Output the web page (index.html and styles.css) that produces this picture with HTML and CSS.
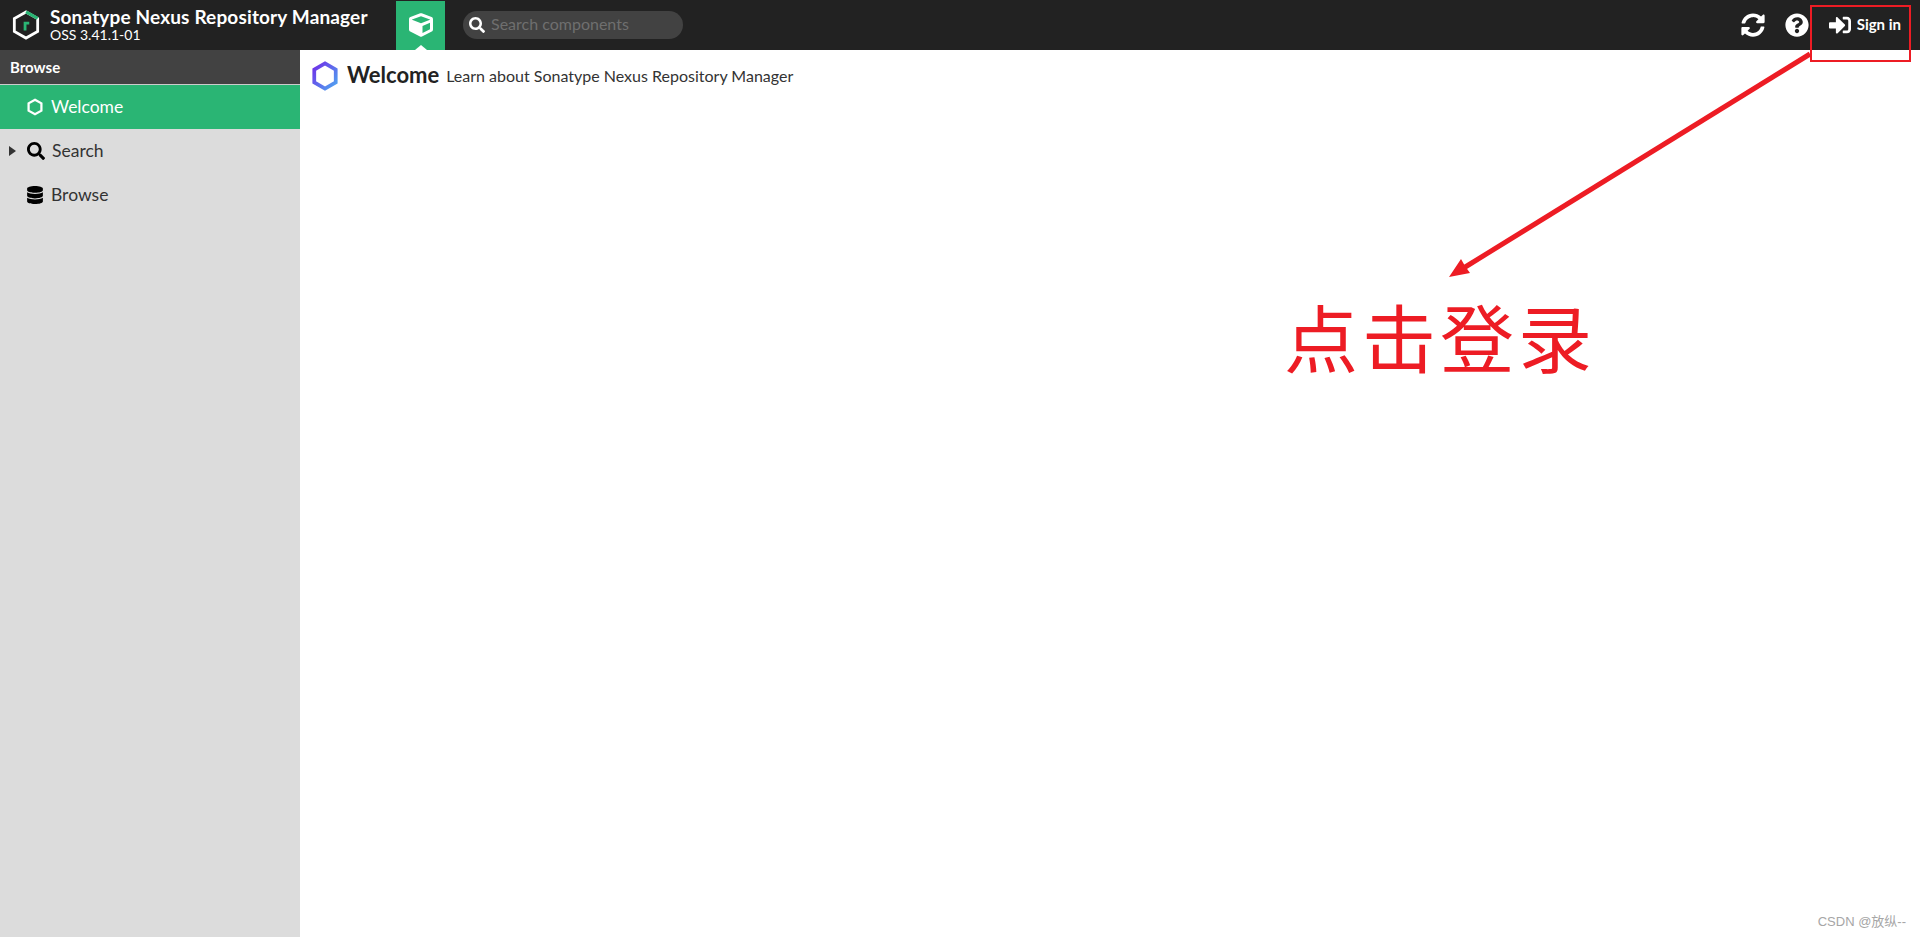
FILE: index.html
```html
<!DOCTYPE html>
<html lang="en">
<head>
  <meta charset="UTF-8">
  <title>Sonatype Nexus Repository Manager</title>
  <link rel="stylesheet" href="styles.css">
</head>
<body>

  <header class="topbar">
    <div class="brand">
      <svg class="brand-logo" viewBox="0 0 30 32">
        <path d="M15 2 L2.5 9 V23 L15 30 L27.5 23 V9 Z" fill="none" stroke="#fff" stroke-width="3"/>
        <path d="M15 2 L27.5 9" fill="none" stroke="#2ab574" stroke-width="3.4"/>
        <path d="M12.5 22 V12.5 H18.5 V15.5 H15.5 V22 Z" fill="#2ab574"/>
      </svg>
      <div class="brand-text">
        <div class="brand-name">Sonatype Nexus Repository Manager</div>
        <div class="brand-version">OSS 3.41.1-01</div>
      </div>
    </div>

    <div class="mode-tab">
      <svg class="mode-icon" viewBox="0 0 512 512"><path fill="#fff" d="M239.1 6.3l-208 78c-18.7 7-31.1 25-31.1 45v225.1c0 18.2 10.3 34.8 26.5 42.9l208 104c13.5 6.8 29.4 6.8 42.9 0l208-104c16.3-8.1 26.5-24.8 26.5-42.9V129.3c0-20-12.4-37.9-31.1-44.9l-208-78C262 2.2 250 2.2 239.1 6.3zM256 68.4l192 72v1.1l-192 78-192-78v-1.1l192-72zm32 356V275.5l160-65v133.9l-160 80z"/></svg>
    </div>

    <div class="search-box">
      <svg class="search-icon" viewBox="0 0 512 512"><path fill="#fff" d="M505 442.7L405.3 343c-4.5-4.5-10.6-7-17-7H372c27.6-35.3 44-79.7 44-128C416 93.1 322.9 0 208 0S0 93.1 0 208s93.1 208 208 208c48.3 0 92.7-16.4 128-44v16.3c0 6.4 2.5 12.5 7 17l99.7 99.7c9.4 9.4 24.6 9.4 33.9 0l28.3-28.3c9.4-9.4 9.4-24.6.1-34zM208 336c-70.7 0-128-57.2-128-128 0-70.7 57.2-128 128-128 70.7 0 128 57.2 128 128 0 70.7-57.2 128-128 128z"/></svg>
      <span class="search-text">Search components</span>
    </div>

    <div class="top-actions">
      <svg class="top-icon" viewBox="0 0 512 512"><path fill="#fff" d="M370.72 133.28C339.458 104.008 298.888 87.962 255.848 88c-77.458.068-144.328 53.178-162.791 126.85-1.344 5.363-6.122 9.15-11.651 9.15H24.103c-7.498 0-13.194-6.807-11.807-14.176C33.933 94.924 134.813 8 256 8c66.448 0 126.791 26.136 171.315 68.685L463.03 40.97C478.149 25.851 504 36.559 504 57.941V192c0 13.255-10.745 24-24 24H345.941c-21.382 0-32.09-25.851-16.971-40.971l41.75-41.749zM32 296h134.059c21.382 0 32.09 25.851 16.971 40.971l-41.75 41.75c31.262 29.273 71.835 45.319 114.876 45.28 77.418-.07 144.315-53.144 162.787-126.849 1.344-5.363 6.122-9.15 11.651-9.15h57.304c7.498 0 13.194 6.807 11.807 14.176C478.067 417.076 377.187 504 256 504c-66.448 0-126.791-26.136-171.315-68.685L48.97 471.03C33.851 486.149 8 475.441 8 454.059V320c0-13.255 10.745-24 24-24z"/></svg>
      <svg class="top-icon" viewBox="0 0 512 512"><path fill="#fff" d="M504 256c0 136.997-111.043 248-248 248S8 392.997 8 256C8 119.083 119.043 8 256 8s248 111.083 248 248zM262.655 90c-54.497 0-89.255 22.957-116.549 63.758-3.536 5.286-2.353 12.415 2.715 16.258l34.699 26.31c5.205 3.947 12.621 3.008 16.665-2.122 17.864-22.658 30.113-35.797 57.303-35.797 20.429 0 45.698 13.148 45.698 32.958 0 14.976-12.363 22.667-32.534 33.976C247.128 238.528 216 254.941 216 296v4c0 6.627 5.373 12 12 12h56c6.627 0 12-5.373 12-12v-1.333c0-28.462 83.186-29.647 83.186-106.667 0-58.002-60.165-102-116.531-102zM256 338c-25.365 0-46 20.635-46 46 0 25.364 20.635 46 46 46s46-20.636 46-46c0-25.365-20.635-46-46-46z"/></svg>
      <div class="sign-in">
        <svg class="sign-icon" viewBox="0 0 512 512"><path fill="#fff" d="M416 448h-84c-6.6 0-12-5.4-12-12v-40c0-6.6 5.4-12 12-12h84c17.7 0 32-14.3 32-32V160c0-17.7-14.3-32-32-32h-84c-6.6 0-12-5.4-12-12V76c0-6.6 5.4-12 12-12h84c53 0 96 43 96 96v192c0 53-43 96-96 96zm-47-201L201 79c-15-15-41-4.5-41 17v96H24c-13.3 0-24 10.7-24 24v96c0 13.3 10.7 24 24 24h136v96c0 21.5 26 32 41 17l168-168c9.3-9.4 9.3-24.6 0-34z"/></svg>
        <span>Sign in</span>
      </div>
    </div>
  </header>

  <div class="main">
    <nav class="sidebar">
      <div class="sidebar-title">Browse</div>
      <div class="nav-item active">
        <svg class="nav-icon" viewBox="0 0 16 16"><path d="M8 1.5 L13.7 4.75 V11.25 L8 14.5 L2.3 11.25 V4.75 Z" fill="none" stroke="#fff" stroke-width="2"/></svg>
        <span>Welcome</span>
      </div>
      <div class="nav-item">
        <span class="nav-arrow"></span>
        <svg class="nav-icon" viewBox="0 0 512 512"><path fill="#000" d="M505 442.7L405.3 343c-4.5-4.5-10.6-7-17-7H372c27.6-35.3 44-79.7 44-128C416 93.1 322.9 0 208 0S0 93.1 0 208s93.1 208 208 208c48.3 0 92.7-16.4 128-44v16.3c0 6.4 2.5 12.5 7 17l99.7 99.7c9.4 9.4 24.6 9.4 33.9 0l28.3-28.3c9.4-9.4 9.4-24.6.1-34zM208 336c-70.7 0-128-57.2-128-128 0-70.7 57.2-128 128-128 70.7 0 128 57.2 128 128 0 70.7-57.2 128-128 128z"/></svg>
        <span>Search</span>
      </div>
      <div class="nav-item">
        <svg class="nav-icon" viewBox="0 0 448 512"><path fill="#000" d="M448 73.143v45.714C448 159.143 347.667 192 224 192S0 159.143 0 118.857V73.143C0 32.857 100.333 0 224 0s224 32.857 224 73.143zM448 176v102.857C448 319.143 347.667 352 224 352S0 319.143 0 278.857V176c48.125 33.143 136.208 48.572 224 48.572S399.874 209.143 448 176zm0 160v102.857C448 479.143 347.667 512 224 512S0 479.143 0 438.857V336c48.125 33.143 136.208 48.572 224 48.572S399.874 369.143 448 336z"/></svg>
        <span>Browse</span>
      </div>
    </nav>

    <section class="content">
      <div class="page-head">
        <svg class="page-icon" viewBox="0 0 30 32">
          <defs>
            <linearGradient id="hexGrad" x1="0" y1="0" x2="1" y2="1">
              <stop offset="0" stop-color="#6f2de8"/>
              <stop offset="1" stop-color="#4fa6f0"/>
            </linearGradient>
          </defs>
          <path d="M15 2.5 L26.5 9.2 V22.8 L15 29.5 L3.5 22.8 V9.2 Z" fill="none" stroke="url(#hexGrad)" stroke-width="4"/>
        </svg>
        <h1 class="page-title">Welcome</h1>
        <span class="page-sub">Learn about Sonatype Nexus Repository Manager</span>
      </div>
    </section>
  </div>

  <!-- annotation drawn over the screenshot -->
  <svg class="note-arrow" viewBox="0 0 1920 937">
    <path d="M1810 54 L1462 269" stroke="#ed1c24" stroke-width="5" fill="none"/>
    <path d="M1449 277 L1461 259 L1465 266 L1470 273 Z" fill="#ed1c24"/>
  </svg>
  <div class="note-box"></div>
  <div class="note-text">点击登录</div>
  <div class="watermark">CSDN @放纵--</div>

</body>
</html>
```

FILE: styles.css
```css
html, body {
  height: 100%;
}
body {
  margin: 0;
  font-family: Lato, "Open Sans", sans-serif;
  color: #333;
  background-color: #fff;
  overflow: hidden;
}
.topbar {
  display: flex;
  align-items: center;
  height: 50px;
  background-color: #222;
}
.brand {
  display: flex;
  align-items: center;
  width: 396px;
  padding-left: 12px;
  box-sizing: border-box;
}
.brand-logo {
  width: 28px;
  height: 32px;
  margin-right: 10px;
}
.brand-name {
  font-size: 19px;
  font-weight: 700;
  line-height: 20px;
  letter-spacing: 0.15px;
  margin-top: -1px;
  color: #fff;
}
.brand-version {
  font-size: 14px;
  line-height: 15px;
  color: #fff;
}
.mode-tab {
  position: relative;
  display: flex;
  justify-content: center;
  width: 49px;
  height: 49px;
  margin-top: 1px;
  background-color: #2ab574;
}
.mode-tab::after {
  content: "";
  position: absolute;
  left: 19px;
  bottom: 0;
  border-left: 6px solid transparent;
  border-right: 6px solid transparent;
  border-bottom: 5px solid #fff;
}
.mode-icon {
  width: 24px;
  height: 26px;
  margin-top: 11px;
}
.search-box {
  display: flex;
  align-items: center;
  width: 220px;
  height: 28px;
  margin-left: 18px;
  padding-left: 6px;
  box-sizing: border-box;
  background-color: #424242;
  border-radius: 14px;
}
.search-icon {
  width: 16px;
  height: 16px;
  margin-right: 6px;
}
.search-text {
  font-size: 16px;
  line-height: 24px;
  margin-top: -2px;
  color: #6f6f6f;
}
.top-actions {
  display: flex;
  align-items: center;
  margin-left: auto;
  padding-right: 19px;
}
.top-icon {
  width: 24px;
  height: 24px;
  margin-right: 20px;
}
.sign-in {
  display: flex;
  align-items: center;
  font-size: 15px;
  font-weight: 700;
  color: #fff;
}
.sign-in span {
  margin-top: -2px;
}
.sign-icon {
  width: 22px;
  height: 22px;
  margin-right: 6px;
}
.main {
  display: flex;
  height: 887px;
}
.sidebar {
  width: 300px;
  flex: none;
  background-color: #dcdcdc;
}
.sidebar-title {
  height: 34px;
  padding-left: 10px;
  border-bottom: 1px solid #ccc;
  background-color: #424242;
  color: #fff;
  font-size: 15px;
  font-weight: 700;
  line-height: 35px;
}
.nav-item {
  position: relative;
  display: flex;
  align-items: center;
  height: 44px;
  padding-left: 26px;
  font-size: 17.5px;
  line-height: 42px;
  color: #333;
}
.nav-item.active {
  background-color: #2ab574;
  color: #fff;
}
.nav-icon {
  width: 18px;
  height: 18px;
  margin-right: 7px;
}
.nav-arrow + .nav-icon {
  margin-left: 1px;
}
.nav-arrow {
  position: absolute;
  left: 9px;
  top: 17px;
  border-top: 5px solid transparent;
  border-bottom: 5px solid transparent;
  border-left: 7px solid #333;
}
.content {
  flex: 1;
  padding: 8px 0 0 11px;
}
.page-head {
  display: flex;
  align-items: center;
}
.page-icon {
  width: 28px;
  height: 32px;
  margin-top: 2px;
  margin-right: 8px;
}
.page-title {
  margin: 0 7px 2px 0;
  font-size: 22px;
  font-weight: 700;
  color: #222;
}
.page-sub {
  font-size: 16px;
  color: #333;
  margin-top: 1px;
}
.note-arrow {
  position: absolute;
  left: 0;
  top: 0;
  width: 1920px;
  height: 937px;
  pointer-events: none;
}
.note-box {
  position: absolute;
  left: 1810px;
  top: 5px;
  width: 97px;
  height: 53px;
  border: 2px solid #ed1c24;
}
.note-text {
  position: absolute;
  left: 1284px;
  top: 285px;
  font-family: "Noto Sans CJK SC", sans-serif;
  font-size: 74px;
  font-weight: 400;
  line-height: 100px;
  letter-spacing: 4px;
  color: #ed1c24;
}
.watermark {
  position: absolute;
  right: 14px;
  top: 911px;
  font-family: "Liberation Sans", "Noto Sans CJK SC", sans-serif;
  font-size: 13px;
  color: #a6a6a6;
}
```
